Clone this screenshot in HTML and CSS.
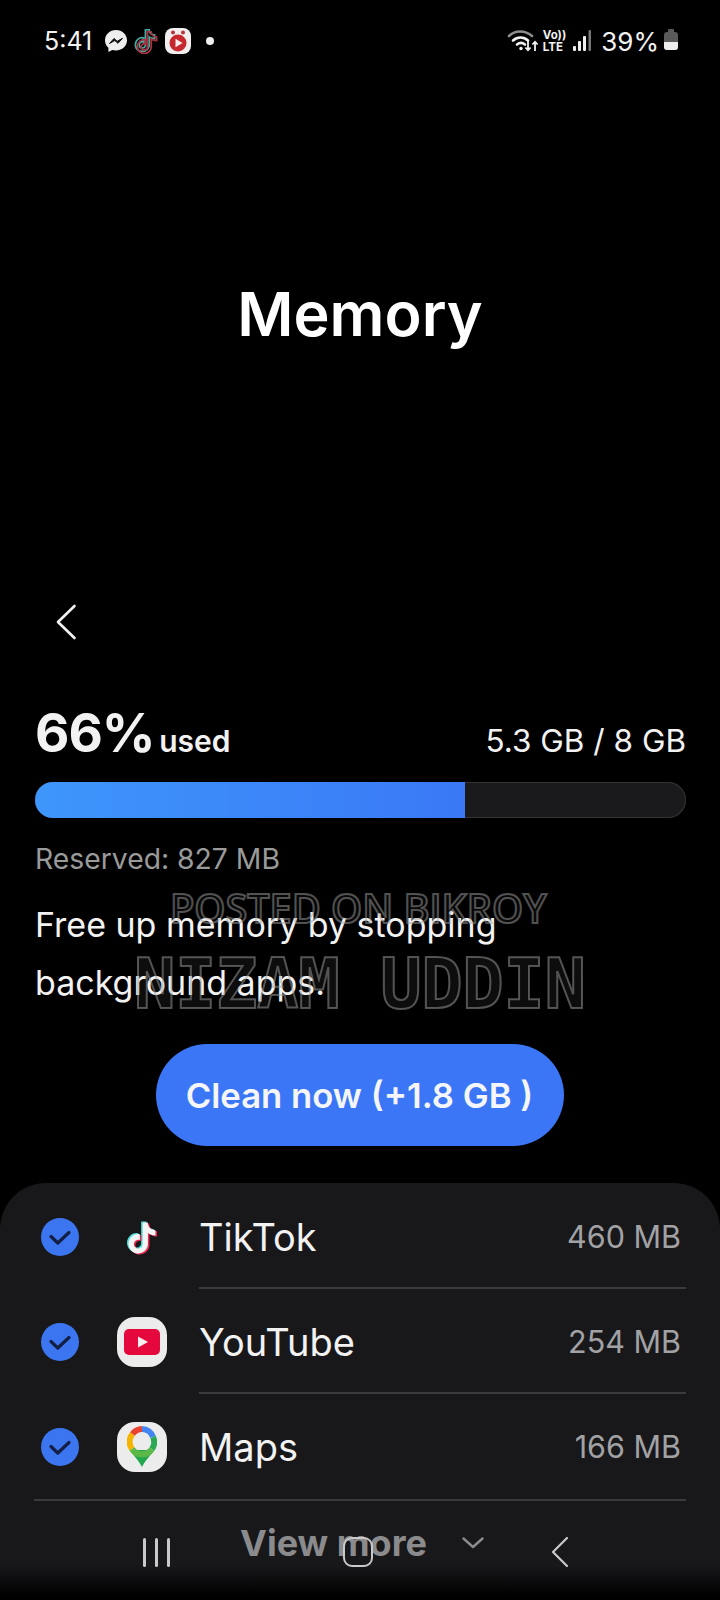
FILE: index.html
```html
<!DOCTYPE html>
<html lang="en">
<head>
  <meta charset="UTF-8" />
  <meta name="viewport" content="width=device-width,initial-scale=1" />
  <title>Memory</title>
  <link rel="stylesheet" href="styles.css">
</head>
<body>
  <svg class="defs" width="0" height="0" aria-hidden="true">
    <symbol id="note" viewBox="0 0 24 24">
      <path d="M12.525.02c1.31-.02 2.61-.01 3.91-.02.08 1.53.63 3.09 1.75 4.17 1.12 1.11 2.7 1.62 4.24 1.79v4.03c-1.44-.05-2.89-.35-4.2-.97-.57-.26-1.1-.59-1.62-.93-.01 2.92.01 5.84-.02 8.75-.08 1.4-.54 2.79-1.35 3.94-1.31 1.92-3.58 3.17-5.91 3.21-1.43.08-2.86-.31-4.08-1.03-2.02-1.19-3.44-3.37-3.65-5.71-.02-.5-.03-1-.01-1.49.18-1.9 1.12-3.72 2.58-4.96 1.66-1.44 3.98-2.13 6.15-1.72.02 1.48-.04 2.96-.04 4.44-.99-.32-2.15-.23-3.02.37-.63.41-1.11 1.04-1.36 1.75-.21.51-.15 1.07-.14 1.61.24 1.64 1.82 3.02 3.5 2.87 1.12-.01 2.19-.66 2.77-1.61.19-.33.4-.67.41-1.06.1-1.79.06-3.57.07-5.36.01-4.03-.01-8.05.02-12.07z"/>
    </symbol>
    <symbol id="check" viewBox="0 0 38 38">
      <circle cx="19" cy="19" r="19" fill="#3b76f0"/>
      <path d="M10 18.5l6.800 6.500L28 14.500" fill="none" stroke="#141f45" stroke-width="3.200" stroke-linecap="round" stroke-linejoin="round"/>
    </symbol>
  </svg>

  <header class="status-bar">
    <div class="status-left">
      <span class="clock">5:41</span>
      <svg class="ico-messenger" width="24" height="24" viewBox="0 0 24 24">
        <path d="M12 1C5.800 1 1 5.400 1 11.300c0 3 1.300 5.600 3.400 7.500V23l3.900-2.100c1.200.3 2.400.5 3.700.5 6.200 0 11-4.400 11-10.100S18.200 1 12 1z" fill="#eee"/>
        <path d="M5.500 14.500l4.500-5 3.200 2.800 5.300-3-4.500 5-3.200-2.800z" fill="#111" stroke="#111" stroke-width="1" stroke-linejoin="round"/>
      </svg>
      <svg class="ico-tiktok-small" width="26" height="28" viewBox="0 0 26 28">
        <use href="#note" x="1" y="2" width="22" height="23" fill="none" stroke="#46aaa3" stroke-width="2"/>
        <use href="#note" x="3" y="4" width="22" height="23" fill="none" stroke="#a8323f" stroke-width="2"/>
      </svg>
      <svg class="ico-player" width="26" height="26" viewBox="0 0 26 26">
        <rect x="0" y="0" width="26" height="26" rx="8" fill="#f0eeee"/>
        <circle cx="13" cy="15" r="8.500" fill="#c5282e"/>
        <circle cx="8" cy="4.500" r="2" fill="#b8343a"/>
        <circle cx="18" cy="4.500" r="2" fill="#b8343a"/>
        <path d="M10.500 10.800l7 4.200-7 4.200z" fill="#f5eeee"/>
      </svg>
      <span class="status-dot"></span>
    </div>
    <div class="status-right">
      <svg class="ico-wifi" width="32" height="28" viewBox="0 0 32 28">
        <g fill="none" stroke-linecap="round" stroke-width="2.600">
          <path d="M2 9C8 3 18 3 25 9" stroke="#8d8d8d"/>
          <path d="M6 13.500c4.500-4 10.500-4 15 0" stroke="#f2f2f2"/>
          <path d="M10 17.500c2.500-2 5.500-2 8 0" stroke="#f2f2f2"/>
        </g>
        <circle cx="14" cy="21.500" r="1.700" fill="#f2f2f2"/>
        <path d="M21 14v9M18.400 20.500l2.600 2.800 2.600-2.800M28 24v-9M25.400 17.500l2.600-2.800 2.600 2.800" fill="none" stroke="#f2f2f2" stroke-width="1.800"/>
      </svg>
      <span class="volte"><span>Vo))</span><span>LTE</span></span>
      <svg width="19" height="22" viewBox="0 0 19 22">
        <rect x="0" y="16" width="3" height="5" rx="1" fill="#eee"/>
        <rect x="5" y="11" width="3" height="10" rx="1" fill="#eee"/>
        <rect x="10" y="6" width="3" height="15" rx="1" fill="#eee"/>
        <rect x="15.500" y="0" width="2.500" height="21" rx="1" fill="#777"/>
      </svg>
      <span class="battery-pct">39%</span>
      <span class="battery"><span class="battery-level"></span></span>
    </div>
  </header>

  <div class="title-block">
    <h1>Memory</h1>
  </div>

  <nav class="back-row">
    <svg width="22" height="36" viewBox="0 0 22 36">
      <path d="M19.500 2L3 18l16.500 16" fill="none" stroke="#f2f2f2" stroke-width="2.600" stroke-linecap="round" stroke-linejoin="round"/>
    </svg>
  </nav>

  <main class="memory">
    <div class="usage-row">
      <div class="usage-pct"><strong>66%</strong> <span>used</span></div>
      <div class="usage-total">5.3 GB / 8 GB</div>
    </div>
    <div class="usage-bar"><div class="usage-fill"></div></div>
    <p class="reserved">Reserved: 827 MB</p>
    <p class="hint">Free up memory by stopping<br>background apps.</p>
    <div class="clean-wrap"><button class="clean-btn">Clean now (+1.8 GB )</button></div>
  </main>

  <section class="app-panel">
    <div class="app-row">
      <svg class="row-check" width="38" height="38"><use href="#check"/></svg>
      <span class="app-icon">
        <svg width="36" height="38" viewBox="0 0 36 38">
          <use href="#note" x="1" y="2" width="31" height="34" fill="#4fe0dc"/>
          <use href="#note" x="4" y="4" width="31" height="34" fill="#f02a52"/>
          <use href="#note" x="2.500" y="3" width="31" height="34" fill="#f4f4f4"/>
        </svg>
      </span>
      <span class="app-name">TikTok</span>
      <span class="app-size">460 MB</span>
    </div>
    <div class="app-row">
      <svg class="row-check" width="38" height="38"><use href="#check"/></svg>
      <span class="app-icon tile">
        <svg width="36" height="26" viewBox="0 0 36 26">
          <rect width="36" height="26" rx="5" fill="#e4083c"/>
          <path d="M14 7.500l10 5.500-10 5.500z" fill="#f6f0f0"/>
        </svg>
      </span>
      <span class="app-name">YouTube</span>
      <span class="app-size">254 MB</span>
    </div>
    <div class="app-row">
      <svg class="row-check" width="38" height="38"><use href="#check"/></svg>
      <span class="app-icon tile">
        <svg width="30" height="42" viewBox="0 0 30 42">
          <path d="M3.500 24c2 5 8 10 11.500 17 3.500-7 9.500-12 11.500-17z" fill="#22a84f"/>
          <g fill="none" stroke-width="6">
            <path d="M5 23A12 12 0 0 1 5.500 8" stroke="#f4b400"/>
            <path d="M5.500 8A12 12 0 0 1 15 3" stroke="#e8432f"/>
            <path d="M15 3A12 12 0 0 1 26 11" stroke="#4285f4"/>
            <path d="M26 11A12 12 0 0 1 25 23" stroke="#2aa854"/>
            <path d="M5 23A12 12 0 0 0 25 23" stroke="#5cb848"/>
          </g>
          <circle cx="15" cy="15" r="8.500" fill="#ececec"/>
        </svg>
      </span>
      <span class="app-name">Maps</span>
      <span class="app-size">166 MB</span>
    </div>
    <div class="view-more">
      <span>View more</span>
      <svg width="22" height="12" viewBox="0 0 22 12">
        <path d="M1.500 1.500L11 10l9.500-8.500" fill="none" stroke="#8b8b8e" stroke-width="2.400" stroke-linecap="round" stroke-linejoin="round"/>
      </svg>
    </div>
  </section>

  <!-- nav bar floats over the panel, same as the phone overlay -->
  <div class="nav-bar">
    <span class="nav-recent"><i></i><i></i><i></i></span>
    <span class="nav-home"></span>
    <svg width="18" height="32" viewBox="0 0 18 32">
      <path d="M16 2L2 16l14 14" fill="none" stroke="#c9c9c9" stroke-width="2.200" stroke-linecap="round" stroke-linejoin="round"/>
    </svg>
  </div>

  <!-- listing watermark burnt into the screenshot -->
  <div class="mark mark-small">POSTED ON BIKROY</div>
  <div class="mark mark-big">NIZAM UDDIN</div>
</body>
</html>
```

FILE: styles.css
```css
html, body {
  margin: 0;
  padding: 0;
}
body {
  position: relative;
  width: 720px;
  height: 1600px;
  overflow: hidden;
  background: #000;
  color: #f2f2f2;
  font-family: Inter, Roboto, sans-serif;
}
.defs {
  position: absolute;
}

.status-bar {
  height: 82px;
  padding: 0 42px 0 44px;
  display: flex;
  align-items: center;
  justify-content: space-between;
}
.status-left,
.status-right {
  display: flex;
  align-items: center;
}
.clock {
  font-size: 25px;
  margin-right: 12px;
}
.ico-tiktok-small {
  margin-left: 5px;
}
.ico-player {
  margin-left: 6px;
}
.status-dot {
  width: 8px;
  height: 8px;
  margin-left: 15px;
  border-radius: 50%;
  background: #eee;
}
.ico-wifi {
  margin-right: 4px;
}
.volte {
  display: flex;
  flex-direction: column;
  font-size: 11.5px;
  line-height: 12px;
  font-weight: 700;
  margin-right: 7px;
}
.battery-pct {
  font-size: 26px;
  margin-left: 9px;
}
.battery {
  position: relative;
  width: 14px;
  height: 18px;
  margin-left: 5px;
  border-radius: 3px;
  background: #5a5a5a;
  display: flex;
  align-items: flex-end;
}
.battery::before {
  content: "";
  position: absolute;
  top: -3px;
  left: 4px;
  width: 6px;
  height: 3px;
  background: #5a5a5a;
  border-radius: 1px 1px 0 0;
}
.battery-level {
  width: 100%;
  height: 8px;
  background: #eee;
  border-radius: 0 0 3px 3px;
}

.title-block {
  height: 464px;
  display: flex;
  align-items: center;
  justify-content: center;
}
.title-block h1 {
  margin: 0;
  font-size: 61px;
  font-weight: 600;
  color: #fff;
}

.back-row {
  height: 72px;
  margin-top: 40px;
  padding-left: 55px;
  display: flex;
  align-items: center;
}

.memory {
  padding: 0 34px 0 35px;
}
.usage-row {
  margin-top: 43px;
  display: flex;
  align-items: baseline;
  justify-content: space-between;
}
.usage-pct strong {
  font-size: 53px;
  font-weight: 700;
  letter-spacing: -1px;
}
.usage-pct span {
  font-size: 30px;
  font-weight: 600;
}
.usage-total {
  font-size: 31.500px;
}
.usage-bar {
  height: 36px;
  margin-top: 17px;
  border-radius: 18px;
  background: #1a1a1c;
  box-shadow: inset 0 0 0 1px #333;
  overflow: hidden;
}
.usage-fill {
  width: 66%;
  height: 100%;
  background: linear-gradient(90deg, #3e96fb, #3a78f6);
}
.reserved {
  margin: 24px 0 0;
  font-size: 28.300px;
  color: #9a9a9a;
}
.hint {
  margin: 20px 0 0;
  font-size: 34px;
  line-height: 58px;
  color: #f2f2f2;
}
.clean-wrap {
  margin: 32px 1px 0 -1px;
  display: flex;
  justify-content: center;
}
.clean-btn {
  width: 408px;
  height: 102px;
  border: none;
  border-radius: 51px;
  background: #3b76f6;
  color: #f4f6fb;
  font-family: inherit;
  font-size: 34.700px;
  font-weight: 600;
}

.app-panel {
  position: absolute;
  left: 0;
  right: 0;
  top: 1183px;
  bottom: 0;
  padding: 1px 34px 0;
  background: #18181b;
  border-radius: 46px 46px 0 0;
}
.app-row {
  height: 105px;
  display: flex;
  align-items: center;
  position: relative;
}
.app-row:not(:nth-child(3))::after {
  content: "";
  position: absolute;
  left: 165px;
  right: 0;
  bottom: 0;
  height: 2px;
  background: #3a3b3e;
}
.app-row:nth-child(3) {
  border-bottom: 2px solid #3a3b3e;
}
.row-check {
  margin-left: 7px;
  flex: none;
}
.app-icon {
  width: 50px;
  height: 50px;
  margin-left: 38px;
  display: flex;
  align-items: center;
  justify-content: center;
  flex: none;
}
.app-icon.tile {
  background: #ececec;
  border-radius: 36%;
}
.app-name {
  margin-left: 32px;
  font-size: 38px;
  flex: 1;
}
.app-size {
  margin-right: 5px;
  font-size: 30.500px;
  color: #a2a2a5;
}
.view-more {
  margin-top: 20px;
  padding-left: 206px;
  display: flex;
  align-items: center;
  gap: 35px;
  font-size: 36px;
  font-weight: 700;
  color: #8b8b8e;
}

.nav-bar {
  position: absolute;
  left: 0;
  right: 0;
  bottom: 0;
  height: 92px;
  background: linear-gradient(180deg, transparent 62%, #000 96%);
}
.nav-recent {
  position: absolute;
  left: 143px;
  bottom: 33px;
  display: flex;
  gap: 9px;
}
.nav-recent i {
  display: block;
  width: 3px;
  height: 29px;
  border-radius: 2px;
  background: #c9c9c9;
}
.nav-home {
  position: absolute;
  left: 343px;
  bottom: 33px;
  width: 26px;
  height: 26px;
  border: 2px solid #c9c9c9;
  border-radius: 9px;
}
.nav-bar svg {
  position: absolute;
  left: 551px;
  bottom: 32px;
}

.mark {
  position: absolute;
  white-space: nowrap;
  color: rgba(255, 255, 255, 0.05);
  -webkit-text-stroke: 2px rgba(160, 160, 160, 0.5);
}
.mark-small {
  left: 170px;
  top: 881px;
  font-family: "Open Sans", sans-serif;
  font-size: 39.600px;
  font-weight: 600;
}
.mark-big {
  left: 134px;
  top: 944px;
  font-family: "DejaVu Sans Mono", monospace;
  font-size: 69px;
  font-weight: 700;
  letter-spacing: -0.500px;
}
```
